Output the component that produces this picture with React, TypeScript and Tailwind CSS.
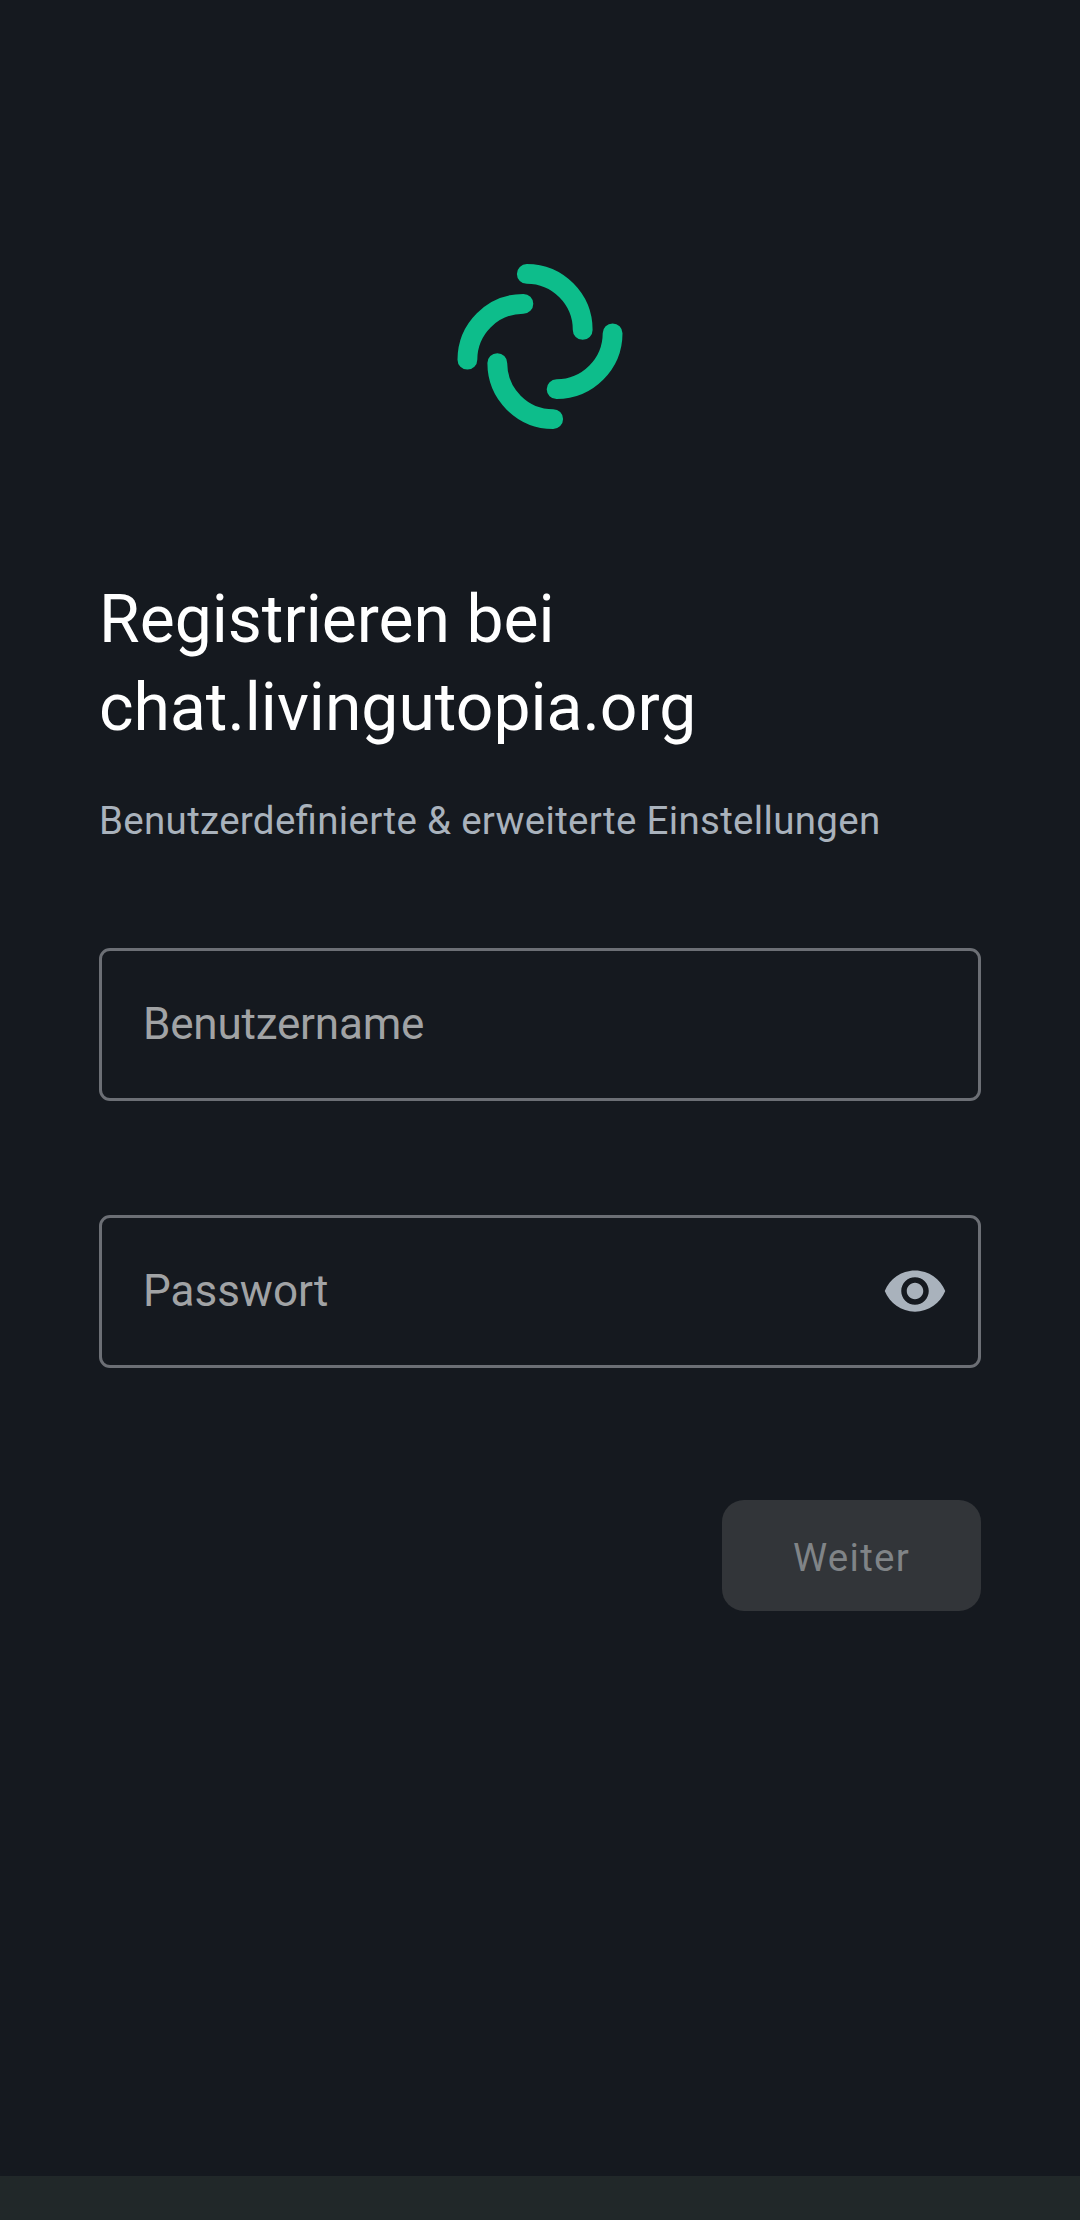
import type { ReactNode } from "react";

function Logo() {
  const arc = "M-13.2 -72.6A56 56 0 0 1 42.7 -16.6";
  return (
    <svg
      className="h-[168px] w-[168px]"
      viewBox="-84 -84.5 168 168"
      fill="none"
      stroke="#0dbd8b"
      strokeWidth="19.8"
      strokeLinecap="round"
    >
      <path d={arc} />
      <path d={arc} transform="rotate(90)" />
      <path d={arc} transform="rotate(180)" />
      <path d={arc} transform="rotate(270)" />
    </svg>
  );
}

function EyeIcon() {
  return (
    <svg className="mb-px h-[66px] w-[66px]" viewBox="0 0 24 24" fill="#a9b2bc">
      <path d="M12 4.5C7 4.5 2.73 7.61 1 12c1.73 4.39 6 7.5 11 7.5s9.27-3.11 11-7.5c-1.73-4.39-6-7.5-11-7.5zM12 17c-2.76 0-5-2.24-5-5s2.24-5 5-5 5 2.24 5 5-2.24 5-5 5zm0-8c-1.66 0-3 1.34-3 3s1.34 3 3 3 3-1.34 3-3-1.34-3-3-3z" />
    </svg>
  );
}

function Field({ label, children }: { label: ReactNode; children?: ReactNode }) {
  return (
    <div className="flex h-[153px] items-center justify-between rounded-[11px] border-3 border-[#6c6f75] pr-[30px] pl-[41px]">
      <span className="mb-[2px] text-[44px] leading-[52px] text-[#a1a3a5]">{label}</span>
      {children}
    </div>
  );
}

export default function App() {
  return (
    <div className="flex h-[2220px] w-[1080px] flex-col bg-[#15191f] font-['Roboto',sans-serif]">
      <main className="flex flex-1 flex-col px-[99px] pt-[262px]">
        <div className="flex justify-center">
          <Logo />
        </div>
        <h1 className="mt-[146px] text-[66px] leading-[88px] text-white">
          Registrieren bei
          <br />
          chat.livingutopia.org
        </h1>
        <p className="mt-[43px] text-[38.5px] leading-[52px] tracking-[0.31px] whitespace-nowrap text-[#a9b2bc] [font-feature-settings:'liga'_1]">
          Benutzerdefinierte &amp; erweiterte Einstellungen
        </p>
        <div className="mt-[101px] flex flex-col gap-[114px]">
          <Field label={<span className="tracking-[-0.2px]">Benutzername</span>} />
          <Field label="Passwort">
            <EyeIcon />
          </Field>
        </div>
        <button
          type="button"
          disabled
          className="mt-[132px] flex h-[111px] w-[259px] items-center justify-center self-end rounded-[22px] bg-[#323539] pt-[4px] text-[38.5px] tracking-[1.3px] text-[#808487]"
        >
          Weiter
        </button>
      </main>
      <footer className="h-[44px] bg-[#212829]" />
    </div>
  );
}
